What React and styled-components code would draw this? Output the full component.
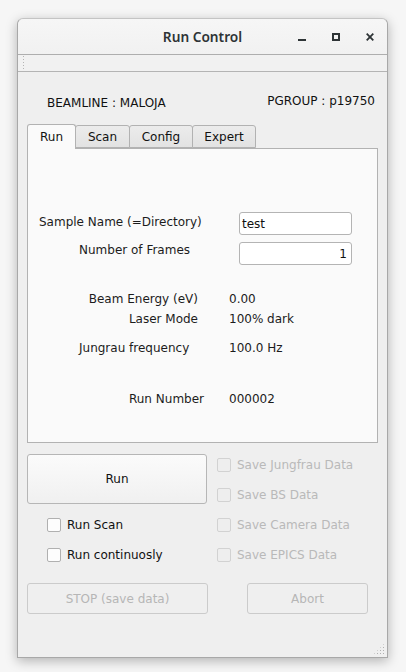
import React from 'react';
import styled, { createGlobalStyle } from 'styled-components';

const GlobalStyle = createGlobalStyle`
  html, body {
    margin: 0;
    padding: 0;
    background: #f6f6f6;
  }
  body {
    font-family: 'DejaVu Sans', 'Liberation Sans', sans-serif;
    font-size: 12px;
    color: #1c1c1c;
  }
`;

const Desktop = styled.div`
  width: 406px;
  height: 672px;
  padding: 18px 0 0 17px;
  box-sizing: border-box;
`;

const Window = styled.div`
  position: relative;
  width: 371px;
  height: 640px;
  box-sizing: border-box;
  display: flex;
  flex-direction: column;
  background: #efefef;
  border: 1px solid #a8a8a8;
  border-top-color: #c4c4c4;
  border-radius: 6px 6px 0 0;
  box-shadow: 0 3px 12px rgba(0, 0, 0, 0.28);
`;

const TitleBar = styled.div`
  height: 35px;
  flex: none;
  display: flex;
  align-items: center;
  justify-content: center;
  position: relative;
  background: linear-gradient(#f6f6f6, #f1f1f1);
  border-bottom: 1px solid #aeaeae;
  border-radius: 6px 6px 0 0;
`;

const Title = styled.span`
  font-family: 'Noto Sans', 'DejaVu Sans', sans-serif;
  font-weight: 600;
  font-size: 13.7px;
  color: #2e3436;
`;

const WinControls = styled.div`
  position: absolute;
  right: 13px;
  top: 14px;
  display: flex;
  gap: 26px;
`;

const WinIcon = styled.svg`
  width: 8px;
  height: 8px;
  display: block;
`;

const ToolStrip = styled.div`
  height: 16px;
  flex: none;
  background: #f1f1f1;
  border-bottom: 1px solid #b4b4b4;
  display: flex;
  align-items: stretch;
  padding-left: 4px;
`;

const Grip = styled.div`
  width: 4px;
  background-image: radial-gradient(circle, #b4b4b4 0.8px, transparent 1px);
  background-size: 3px 3px;
`;

const Content = styled.div`
  flex: 1;
  display: flex;
  flex-direction: column;
  padding: 0 9px;
`;

const Header = styled.div`
  display: flex;
  justify-content: space-between;
  align-items: flex-start;
  height: 16px;
  margin-top: 22px;
  padding: 0 3px 0 20px;
  color: #111;
`;

const HeaderText = styled.span`
  margin-top: ${(p) => p.$dy || 0}px;
  line-height: 14px;
`;

const TabBar = styled.div`
  display: flex;
  align-items: flex-end;
  margin-top: 13px;
  height: 25px;
  position: relative;
  z-index: 1;
`;

const Tab = styled.div`
  box-sizing: border-box;
  width: ${(p) => p.$w}px;
  height: ${(p) => (p.$active ? 25 : 23)}px;
  margin-left: ${(p) => (p.$first ? 0 : -1)}px;
  margin-bottom: ${(p) => (p.$active ? -1 : 0)}px;
  display: flex;
  align-items: center;
  justify-content: center;
  border: 1px solid #b2b2b2;
  border-bottom: ${(p) => (p.$active ? 'none' : '1px solid #b2b2b2')};
  border-radius: 3px 3px 0 0;
  background: ${(p) => (p.$active ? '#fafafa' : 'linear-gradient(#ececec, #e2e2e2)')};
  color: #111;
  padding-top: ${(p) => (p.$active ? 0 : 1)}px;
  z-index: ${(p) => (p.$active ? 2 : 1)};
`;

const Pane = styled.div`
  box-sizing: border-box;
  width: 351px;
  height: 295px;
  background: #fafafa;
  border: 1px solid #b2b2b2;
  padding-top: 63px;
  display: flex;
  flex-direction: column;
`;

const FieldRow = styled.div`
  display: grid;
  grid-template-columns: 211px 113px;
  height: 23px;
  margin-top: ${(p) => p.$mt || 0}px;
`;

const InfoRow = styled.div`
  display: grid;
  grid-template-columns: 201px 1fr;
  align-items: center;
  height: 20px;
  margin-top: ${(p) => p.$mt || 0}px;
`;

const Label = styled.span`
  line-height: 14px;
  text-align: ${(p) => p.$align || 'left'};
  padding-left: ${(p) => p.$pl || 0}px;
  padding-right: ${(p) => p.$pr || 0}px;
  margin-top: ${(p) => p.$dy || 0}px;
  align-self: ${(p) => (p.$dy !== undefined ? 'start' : 'center')};
  white-space: nowrap;
`;

const Value = styled.span`
  line-height: 14px;
`;

const TextInput = styled.div`
  box-sizing: border-box;
  height: 23px;
  background: #fff;
  border: 1px solid #b4b4b4;
  border-radius: 3px;
  display: flex;
  align-items: center;
  justify-content: ${(p) => (p.$right ? 'flex-end' : 'flex-start')};
  padding: 0 ${(p) => (p.$right ? 4 : 2)}px 0 2px;
  color: #111;
`;

const Controls = styled.div`
  display: grid;
  grid-template-columns: 180px 1fr;
  grid-template-rows: repeat(4, 30px);
  column-gap: 10px;
  margin-top: 7px;
`;

const BigButton = styled.div`
  grid-row: 1 / span 2;
  box-sizing: border-box;
  height: 50px;
  margin-top: 4px;
  display: flex;
  align-items: center;
  justify-content: center;
  border: 1px solid #b6b6b6;
  border-radius: 3px;
  background: linear-gradient(#fbfbfb, #f0f0f0);
  color: #111;
`;

const Check = styled.label`
  display: flex;
  align-items: center;
  gap: 6px;
  padding-left: ${(p) => p.$pl || 0}px;
  color: ${(p) => (p.$disabled ? '#b9b9b9' : '#111')};
  grid-column: ${(p) => p.$col};
`;

const Box = styled.span`
  box-sizing: border-box;
  width: 14px;
  height: 14px;
  border: 1px solid ${(p) => (p.$disabled ? '#d2d2d2' : '#b0b0b0')};
  border-radius: 2px;
  background: ${(p) => (p.$disabled ? '#eeeeee' : '#fdfdfd')};
`;

const ButtonRow = styled.div`
  display: flex;
  gap: 39px;
  margin-top: 13px;
`;

const FlatButton = styled.div`
  box-sizing: border-box;
  width: ${(p) => p.$w}px;
  height: 31px;
  display: flex;
  align-items: center;
  justify-content: center;
  border: 1px solid #cbcbcb;
  border-radius: 3px;
  background: #efefef;
  color: #b6b6b6;
`;

const ResizeGrip = styled.div`
  position: absolute;
  right: 2px;
  bottom: 2px;
  width: 12px;
  height: 12px;
  background-image: radial-gradient(circle, #b0b0b0 0.7px, transparent 1px);
  background-size: 3px 3px;
  clip-path: polygon(100% 0, 100% 100%, 0 100%);
`;

const CheckItem = ({ label, disabled, col, pl }) => (
  <Check $disabled={disabled} $col={col} $pl={pl}>
    <Box $disabled={disabled} />
    {label}
  </Check>
);

export default function App() {
  return (
    <>
      <GlobalStyle />
      <Desktop>
        <Window>
          <TitleBar>
            <Title>Run Control</Title>
            <WinControls>
              <WinIcon viewBox="0 0 8 8">
                <rect x="0" y="6" width="8" height="2" fill="#2e3436" />
              </WinIcon>
              <WinIcon viewBox="0 0 8 8">
                <rect x="1" y="1" width="6" height="6" fill="none" stroke="#2e3436" strokeWidth="2" />
              </WinIcon>
              <WinIcon viewBox="0 0 8 8">
                <path d="M0.7 0.7 L7.3 7.3 M7.3 0.7 L0.7 7.3" stroke="#2e3436" strokeWidth="1.8" />
              </WinIcon>
            </WinControls>
          </TitleBar>
          <ToolStrip>
            <Grip />
          </ToolStrip>
          <Content>
            <Header>
              <HeaderText $dy={2}>BEAMLINE : MALOJA</HeaderText>
              <HeaderText>PGROUP : p19750</HeaderText>
            </Header>
            <TabBar>
              <Tab $w={49} $first $active>Run</Tab>
              <Tab $w={55}>Scan</Tab>
              <Tab $w={64}>Config</Tab>
              <Tab $w={64}>Expert</Tab>
            </TabBar>
            <Pane>
              <FieldRow>
                <Label $pl={11} $dy={3}>Sample Name (=Directory)</Label>
                <TextInput>test</TextInput>
              </FieldRow>
              <FieldRow $mt={7}>
                <Label $pl={51} $dy={1}>Number of Frames</Label>
                <TextInput $right>1</TextInput>
              </FieldRow>
              <InfoRow $mt={24}>
                <Label $align="right" $pr={31}>Beam Energy (eV)</Label>
                <Value>0.00</Value>
              </InfoRow>
              <InfoRow>
                <Label $align="right" $pr={31}>Laser Mode</Label>
                <Value>100% dark</Value>
              </InfoRow>
              <InfoRow $mt={9}>
                <Label $pl={51}>Jungrau frequency</Label>
                <Value>100.0 Hz</Value>
              </InfoRow>
              <InfoRow $mt={31}>
                <Label $align="right" $pr={25}>Run Number</Label>
                <Value>000002</Value>
              </InfoRow>
            </Pane>
            <Controls>
              <BigButton>Run</BigButton>
              <CheckItem label="Save Jungfrau Data" disabled col={2} />
              <CheckItem label="Save BS Data" disabled col={2} />
              <CheckItem label="Run Scan" col={1} pl={20} />
              <CheckItem label="Save Camera Data" disabled col={2} />
              <CheckItem label="Run continuosly" col={1} pl={20} />
              <CheckItem label="Save EPICS Data" disabled col={2} />
            </Controls>
            <ButtonRow>
              <FlatButton $w={181}>STOP (save data)</FlatButton>
              <FlatButton $w={121}>Abort</FlatButton>
            </ButtonRow>
          </Content>
          <ResizeGrip />
        </Window>
      </Desktop>
    </>
  );
}
